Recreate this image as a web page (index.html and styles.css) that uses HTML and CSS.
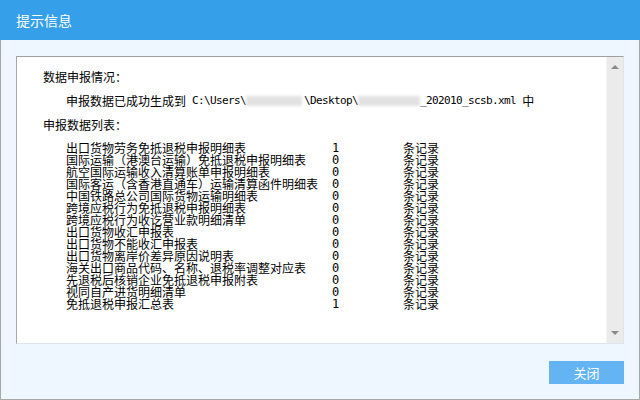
FILE: index.html
```html
<!DOCTYPE html>
<html lang="zh-CN">
<head>
<meta charset="utf-8">
<title>提示信息</title>
<link rel="stylesheet" href="styles.css">
</head>
<body>
<div class="dialog">
  <div class="titlebar">提示信息</div>
  <div class="body">
    <div class="textbox">
      <div class="content">
        <div class="line">数据申报情况：</div>
        <div class="line indent">申报数据已成功生成到<span class="mono"> C:\Users\</span><span class="blur b1"></span><span class="mono">\Desktop\</span><span class="blur b2"></span><span class="mono">_202010_scsb.xml </span>中</div>
        <div class="line">申报数据列表：</div>
        <div class="list">
          <span>出口货物劳务免抵退税申报明细表</span><span class="num">1</span><span>条记录</span>
          <span>国际运输（港澳台运输）免抵退税申报明细表</span><span class="num">0</span><span>条记录</span>
          <span>航空国际运输收入清算账单申报明细表</span><span class="num">0</span><span>条记录</span>
          <span>国际客运（含香港直通车）运输清算函件明细表</span><span class="num">0</span><span>条记录</span>
          <span>中国铁路总公司国际货物运输明细表</span><span class="num">0</span><span>条记录</span>
          <span>跨境应税行为免抵退税申报明细表</span><span class="num">0</span><span>条记录</span>
          <span>跨境应税行为收讫营业款明细清单</span><span class="num">0</span><span>条记录</span>
          <span>出口货物收汇申报表</span><span class="num">0</span><span>条记录</span>
          <span>出口货物不能收汇申报表</span><span class="num">0</span><span>条记录</span>
          <span>出口货物离岸价差异原因说明表</span><span class="num">0</span><span>条记录</span>
          <span>海关出口商品代码、名称、退税率调整对应表</span><span class="num">0</span><span>条记录</span>
          <span>先退税后核销企业免抵退税申报附表</span><span class="num">0</span><span>条记录</span>
          <span>视同自产进货明细清单</span><span class="num">0</span><span>条记录</span>
          <span>免抵退税申报汇总表</span><span class="num">1</span><span>条记录</span>
        </div>
      </div>
      <div class="scrollbar">
        <span class="arrow up"></span>
        <span class="arrow down"></span>
      </div>
    </div>
    <div class="footer">
      <button class="btn">关闭</button>
    </div>
  </div>
</div>
</body>
</html>
```

FILE: styles.css
```css
html, body {
  margin: 0;
  padding: 0;
}
body {
  width: 640px;
  height: 400px;
  overflow: hidden;
  font-family: "Noto Sans CJK SC", "Liberation Sans", sans-serif;
}
.dialog {
  width: 640px;
  height: 400px;
  display: flex;
  flex-direction: column;
}
.titlebar {
  height: 40px;
  line-height: 40px;
  background: #369fea;
  color: #fff;
  font-size: 14px;
  padding-left: 16px;
}
.body {
  flex: 1;
  background: #eef6ff;
  border-left: 1px solid #a8a8a8;
  border-right: 1px solid #a8a8a8;
  border-bottom: 1px solid #a8a8a8;
  padding: 16px 15px 0 15px;
  display: flex;
  flex-direction: column;
}
.textbox {
  height: 286px;
  background: #fff;
  border-top: 1px solid #a0a0a0;
  border-left: 1px solid #a8a8a8;
  border-right: 1px solid #dfe4ea;
  border-bottom: 1px solid #dfe4ea;
  display: flex;
}
.content {
  flex: 1;
  padding: 8px 0 0 26px;
  font-size: 12px;
  color: #000;
}
.line {
  height: 24px;
  line-height: 24px;
  white-space: pre;
  display: flex;
  align-items: center;
}
.indent {
  padding-left: 23px;
}
.mono {
  font-family: "DejaVu Sans Mono", "Liberation Mono", monospace;
  font-size: 11px;
  letter-spacing: -0.62px;
  white-space: pre;
}
.blur {
  display: inline-block;
  height: 10px;
  background: #e2e2e2;
  filter: blur(1.5px);
}
.b1 { width: 56px; margin-right: 2px; }
.b2 { width: 62px; }
.list {
  margin-top: 5px;
  padding-left: 23px;
  display: grid;
  grid-template-columns: 266px 71px auto;
  grid-auto-rows: 12px;
  line-height: 12px;
}
.num {
  font-family: "DejaVu Sans Mono", "Liberation Mono", monospace;
  font-size: 12px;
}
.scrollbar {
  width: 16px;
  background: #ebebeb;
  border-left: 1px solid #f4f4f4;
  display: flex;
  flex-direction: column;
  justify-content: space-between;
  align-items: center;
  padding: 8px 0 8px;
}
.arrow {
  width: 0;
  height: 0;
  border-left: 4px solid transparent;
  border-right: 4px solid transparent;
}
.up {
  border-bottom: 4px solid #8a8a8a;
}
.down {
  border-top: 4px solid #8a8a8a;
}
.footer {
  display: flex;
  justify-content: flex-end;
  margin-top: 17px;
}
.btn {
  width: 75px;
  height: 23px;
  background: #64b4f4;
  color: #fff;
  border: none;
  padding: 0;
  font-family: "Noto Sans CJK SC", sans-serif;
  font-size: 13px;
  line-height: 23px;
}
```
